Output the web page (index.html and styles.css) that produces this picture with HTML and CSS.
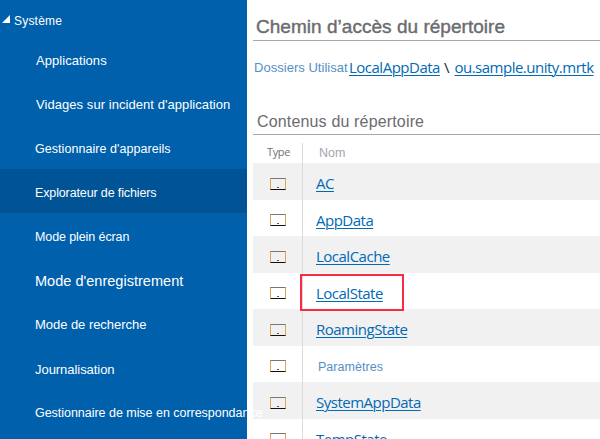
FILE: index.html
```html
<!DOCTYPE html>
<html lang="fr">
<head>
<meta charset="utf-8">
<title>Explorateur de fichiers</title>
<link rel="stylesheet" href="styles.css">
</head>
<body>
<div class="portal">
  <nav class="sidebar">
    <div class="group"><svg class="caret" viewBox="0 0 8 8"><path d="M0 8L8 0V8Z" fill="#fff"/></svg><span class="group-name">Système</span></div>
    <a class="item apps"><span>Applications</span></a>
    <a class="item dumps"><span>Vidages sur incident d'application</span></a>
    <a class="item devices"><span>Gestionnaire d'appareils</span></a>
    <a class="item explorer selected"><span>Explorateur de fichiers</span></a>
    <a class="item kiosk"><span>Mode plein écran</span></a>
    <a class="item logging"><span>Mode d'enregistrement</span></a>
    <a class="item research"><span>Mode de recherche</span></a>
    <a class="item journal"><span>Journalisation</span></a>
    <a class="item map"><span>Gestionnaire de mise en correspondance</span></a>
  </nav>
  <main class="content">
    <h1><span>Chemin d’accès du répertoire</span></h1>
    <div class="path"><span class="root">Dossiers Utilisat</span><a class="link local">LocalAppData</a><span class="slash">\</span><a class="link package">ou.sample.unity.mrtk</a></div>
    <h2><span>Contenus du répertoire</span></h2>
    <div class="table">
      <div class="row head"><div class="type"><span>Type</span></div><div class="name"><span>Nom</span></div></div>
      <div class="row"><div class="type"><i class="folder"></i></div><div class="name"><a class="link">AC</a></div></div>
      <div class="row"><div class="type"><i class="folder"></i></div><div class="name"><a class="link">AppData</a></div></div>
      <div class="row"><div class="type"><i class="folder"></i></div><div class="name"><a class="link">LocalCache</a></div></div>
      <div class="row marked"><div class="type"><i class="folder"></i></div><div class="name"><a class="link">LocalState</a></div></div>
      <div class="row"><div class="type"><i class="folder"></i></div><div class="name"><a class="link">RoamingState</a></div></div>
      <div class="row"><div class="type"><i class="folder"></i></div><div class="name"><span class="settings">Paramètres</span></div></div>
      <div class="row"><div class="type"><i class="folder"></i></div><div class="name"><a class="link">SystemAppData</a></div></div>
      <div class="row"><div class="type"><i class="folder"></i></div><div class="name"><a class="link">TempState</a></div></div>
    </div>
  </main>
</div>
</body>
</html>
```

FILE: styles.css
```css
*, *::before, *::after { box-sizing: border-box; }
body { margin: 0; background: #fff; overflow: hidden; font-family: "Liberation Sans", sans-serif; }
.portal { display: flex; width: 600px; height: 439px; overflow: hidden; }
.sidebar { width: 247px; flex: none; background: #0060ac; color: #fff; white-space: nowrap; position: relative; z-index: 1; }
.group { height: 37px; padding: 4px 0 0 2px; display: flex; align-items: center; font-size: 12px; }
.caret { width: 8px; height: 8px; margin: 0 4px 3px 0; }
.group-name { letter-spacing: 0.2px; }
.item { display: flex; align-items: center; height: 44px; padding: 3px 0 0 35px; font-size: 13px; }
.selected { background: #005395; }
.apps { letter-spacing: 0.05px; padding-left: 36px; }
.dumps { letter-spacing: 0.06px; padding-left: 36px; }
.devices { font-size: 12.5px; letter-spacing: 0.05px; }
.explorer { font-size: 12.5px; letter-spacing: -0.13px; }
.kiosk { font-size: 12.5px; letter-spacing: -0.1px; }
.logging { font-size: 14.5px; letter-spacing: 0.02px; }
.research { letter-spacing: -0.04px; }
.journal { letter-spacing: -0.05px; padding-top: 5px; }
.map { font-size: 12.5px; letter-spacing: -0.03px; }
.content { flex: 1; min-width: 0; padding-left: 6px; white-space: nowrap; }
h1, h2 { margin: 0; font-weight: 400; color: #6b6b70; display: flex; align-items: flex-end; }
h1 { height: 41px; border-bottom: 1px solid #a9a9a9; padding: 0 0 2px 3px; font-size: 19px; letter-spacing: 0.03px; -webkit-text-stroke: 0.4px #6b6b70; }
.path { height: 54px; display: flex; align-items: center; padding: 0 0 3px 1px; }
.root { width: 95px; flex: none; padding-top: 1px; }
.root, .settings { color: #5590c4; font-size: 13px; letter-spacing: 0.03px; }
.link { font-family: "Open Sans", sans-serif; font-size: 15px; letter-spacing: -0.5px; color: #006ab5; text-decoration: underline; text-underline-offset: 2px; text-decoration-thickness: 1px; }
.slash { font: 15px "Open Sans", sans-serif; color: #222; margin: 0 5px 0 4px; }
h2 { height: 40px; border-bottom: 1px solid #a9a9a9; padding: 0 0 3px 4px; font-size: 16px; letter-spacing: 0.16px; }
.row { display: flex; height: 36px; align-items: stretch; }
.row:nth-child(even) { height: 37px; background: #f1f1f1; }
.row.head { height: 28px; }
.type { width: 50px; flex: none; display: flex; align-items: center; justify-content: center; border-right: 1px solid #dcdcdc; }
.name { display: flex; align-items: center; padding: 3px 0 0 13px; }
.head .type { height: 20px; margin-top: 8px; padding: 0 0 4px 2px; font: 11px "Open Sans", sans-serif; letter-spacing: -0.4px; color: #707078; }
.head .name { font-size: 12.5px; color: #a5a5ad; padding: 8px 0 0 16px; }
.folder { width: 16px; height: 12px; margin: 4px 0 0 1px; border: 1px solid #e0a552; border-top-color: #777; border-bottom: 1px solid #111; display: flex; justify-content: center; align-items: flex-end; padding-bottom: 1px; }
.folder::after { content: ""; width: 2px; height: 1px; background: #555; }
.settings { margin: 2px 0 0 2px; font-size: 12.5px; }
.marked { position: relative; }
.marked::after { content: ""; position: absolute; left: 47px; top: 1px; width: 104px; height: 37px; border: 2px solid #fa2a42; }
```
